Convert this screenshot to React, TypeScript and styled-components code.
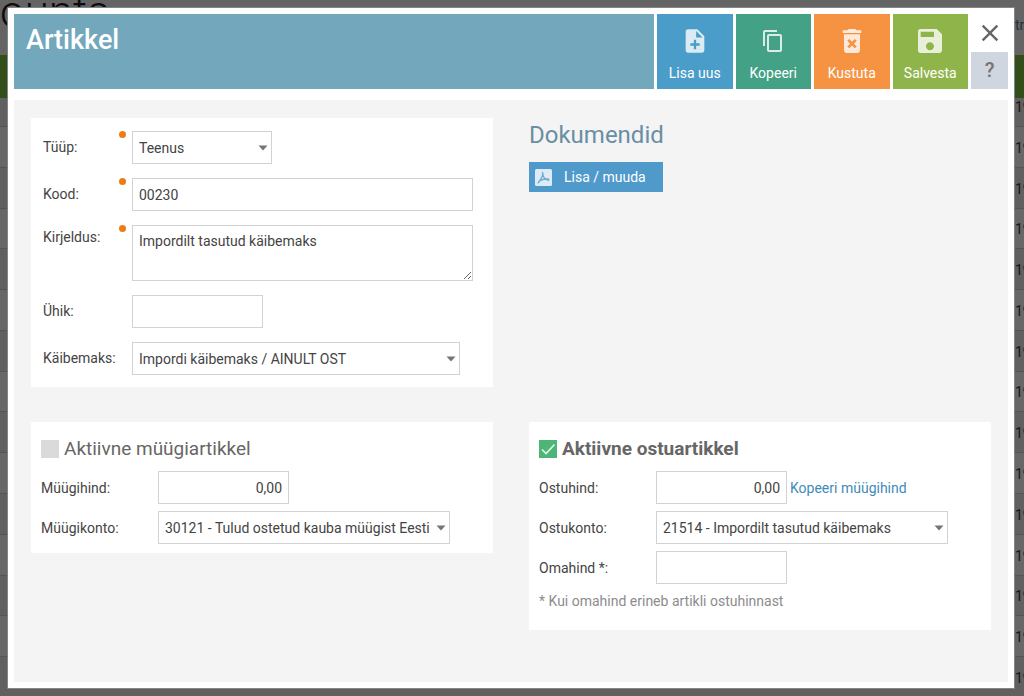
import React, { useState } from "react";
import styled, { createGlobalStyle } from "styled-components";
import {
  MdNoteAdd,
  MdContentCopy,
  MdDeleteForever,
  MdSave,
  MdClose,
} from "react-icons/md";

const GlobalStyle = createGlobalStyle`
  *, *::before, *::after { box-sizing: border-box; }
  body {
    margin: 0;
    background: #636363;
    color: #444;
    font: 14px/20px Roboto, "Liberation Sans", sans-serif;
  }
  button, input, select, textarea { font: inherit; color: inherit; border-radius: 0; }
`;

const Screen = styled.div`
  display: grid;
  grid-template: minmax(100vh, auto) / minmax(0, 1fr);
  overflow: hidden;

  > * {
    grid-area: 1 / 1;
  }
`;

/* Dimmed list page behind the dialog */
const Backdrop = styled.div`
  display: flex;
  flex-direction: column;
  height: 100vh;
  overflow: hidden;
  background: #646464;
  color: #141414;
`;

const BackdropTop = styled.div`
  display: flex;
  justify-content: space-between;
  flex: none;
  height: 55px;
`;

const BackdropHeading = styled.div`
  margin-top: -14px;
  font-size: 44px;
  font-weight: 300;
  line-height: 52px;
  color: #0c0c0c;
`;

const BackdropUser = styled.div`
  width: 9px;
  padding-top: 15px;
  overflow: hidden;
  white-space: nowrap;
  color: #26323a;
`;

const BackdropBand = styled.div`
  flex: none;
  height: 43px;
  background: #324f1a;
`;

const BackdropRows = styled.div`
  display: grid;
  flex: none;
  grid-template-rows: 29px repeat(14, 1fr);
  height: calc(100vh - 96px);
`;

const BackdropRow = styled.div`
  display: flex;
  justify-content: flex-end;
  align-items: flex-end;
  padding-bottom: 10px;
  border-bottom: 1px solid #545454;
  line-height: 18px;

  &:nth-child(even) {
    background: #676767;
  }
  &:nth-child(odd) {
    background: #606060;
  }

  span {
    width: 9px;
    overflow: hidden;
  }
`;

const Dialog = styled.main`
  display: flex;
  flex-direction: column;
  gap: 11px;
  margin: 8px 10px 8px 8px;
  padding: 6px;
  background: #fff;
  box-shadow: 0 0 0 1px #858585;
`;

const Header = styled.header`
  display: flex;
  gap: 3px;
  height: 75px;
`;

const Title = styled.h1`
  flex: 1;
  margin: 0;
  padding: 8px 12px;
  background: #73a7bc;
  color: #fff;
  font-size: 27px;
  font-weight: 500;
  line-height: 36px;
`;

const Actions = styled.div`
  display: grid;
  grid-template-columns: repeat(4, 1fr);
  gap: 3px;
  width: 311px;
`;

const ActionButton = styled.button<{ $color: string }>`
  display: flex;
  flex-direction: column;
  align-items: center;
  padding: 11px 0 0;
  border: 0;
  background: ${(p) => p.$color};
  color: #fff;
  cursor: pointer;

  span {
    display: flex;
    align-items: center;
    justify-content: center;
    height: 32px;
    margin-bottom: 6px;
    opacity: 0.8;
  }
`;

const Corner = styled.div`
  display: flex;
  flex-direction: column;
  width: 37px;
`;

const CornerButton = styled.button<{ $filled?: boolean }>`
  display: flex;
  flex: 1;
  align-items: center;
  justify-content: center;
  padding: 0;
  border: 0;
  background: ${(p) => (p.$filled ? "#cfd6df" : "#fff")};
  color: ${(p) => (p.$filled ? "#757575" : "#666")};
  font-size: 20px;
  font-weight: 500;
  cursor: pointer;
`;

const Body = styled.div`
  display: grid;
  flex: 1;
  grid-template-columns: repeat(2, minmax(0, 1fr));
  align-content: start;
  align-items: start;
  gap: 35px 36px;
  padding: 18px 17px;
  background: #f4f4f4;
`;

const DetailsCard = styled.section`
  display: flex;
  flex-direction: column;
  gap: 14px;
  padding: 13px 20px 12px 12px;
  background: #fff;
`;

const DetailsRow = styled.div<{ $top?: boolean }>`
  display: flex;
  align-items: ${(p) => (p.$top ? "flex-start" : "center")};

  label {
    flex: none;
    width: 76px;
    padding: ${(p) => (p.$top ? "2px 0" : "0 0 2px")};
    white-space: nowrap;
  }
`;

const Marker = styled.span<{ $on?: boolean }>`
  flex: none;
  align-self: flex-start;
  width: 7px;
  height: 7px;
  margin-right: 6px;
  border-radius: 50%;
  background: ${(p) => (p.$on ? "#f07a1a" : "transparent")};
`;

const TextInput = styled.input<{ $wide?: boolean }>`
  width: ${(p) => (p.$wide ? "100%" : "131px")};
  height: 33px;
  padding: 0 6px;
  border: 1px solid #d2d2d2;
  background: #fff;
`;

const AmountInput = styled(TextInput)`
  text-align: right;
`;

const TextArea = styled.textarea`
  display: block;
  width: 100%;
  height: 56px;
  padding: 5px 6px;
  border: 1px solid #d2d2d2;
  background: #fff;
  resize: vertical;
`;

const SelectBox = styled.div<{ $width: number }>`
  position: relative;
  width: ${(p) => p.$width}px;
  max-width: 100%;

  select {
    display: block;
    width: 100%;
    height: 33px;
    padding: 0 16px 0 6px;
    border: 1px solid #d2d2d2;
    background: #fff;
    appearance: none;
  }

  svg {
    position: absolute;
    top: 14px;
    right: 4px;
    pointer-events: none;
  }
`;

const Documents = styled.section`
  display: flex;
  flex-direction: column;
  align-items: flex-start;
  gap: 11px;
`;

const DocumentsTitle = styled.h2`
  margin: 0;
  padding-top: 1px;
  color: #6a8ea3;
  font-size: 24px;
  font-weight: 400;
  line-height: 32px;
`;

const DocumentsButton = styled.button`
  display: flex;
  align-items: center;
  gap: 12px;
  height: 30px;
  padding: 0 17px 0 6px;
  border: 0;
  background: #5099cb;
  color: #fff;
  cursor: pointer;
`;

const PriceCard = styled.section`
  display: flex;
  flex-direction: column;
  gap: 7px;
  padding: 14px 10px 9px;
  background: #fff;
`;

const PriceHeading = styled.label<{ $active?: boolean }>`
  display: flex;
  align-items: center;
  gap: 5px;
  margin-bottom: 2px;
  color: #666;
  font-size: 19px;
  font-weight: ${(p) => (p.$active ? 700 : 400)};
  line-height: 26px;
`;

const CheckFrame = styled.span`
  position: relative;
  display: flex;

  input {
    width: 18px;
    height: 18px;
    margin: 0;
    background: #dadada;
    appearance: none;
  }
  input:checked {
    background: #4db676;
  }
  svg {
    position: absolute;
    inset: 0;
    pointer-events: none;
  }
`;

const PriceRow = styled.div`
  display: flex;
  align-items: center;

  > label {
    flex: none;
    width: 117px;
  }
`;

const CopyLink = styled.a`
  margin-left: 3px;
  color: #3f8cb8;
  text-decoration: none;
`;

const Note = styled.p`
  margin: 0 0 10px;
  color: #8c8c8c;
`;

const PdfIcon = () => (
  <svg width="17" height="17" viewBox="0 0 17 17" aria-hidden="true">
    <rect width="17" height="17" rx="1.5" fill="#dcebf5" />
    <path
      d="M7.600 3.400C8.300 6.500 7 9.300 3.300 13.700M7.800 4.500C8 8 10 10.600 13.600 11.200M4.800 11.600C7.500 10.200 10.500 9.600 13.800 10.200"
      fill="none"
      stroke="#6fabd5"
      strokeWidth="1.400"
      strokeLinecap="round"
    />
  </svg>
);

type SelectProps = { id: string; width: number; value: string };

const Select = ({ id, width, value }: SelectProps) => (
  <SelectBox $width={width}>
    <select id={id} defaultValue={value}>
      <option>{value}</option>
    </select>
    <svg width="10" height="6" viewBox="0 0 10 6" aria-hidden="true">
      <path d="M0.500 0.500h9L5 5.500z" fill="#757575" />
    </svg>
  </SelectBox>
);

type CheckProps = { label: string; initial: boolean };

const ActiveToggle = ({ label, initial }: CheckProps) => {
  const [checked, setChecked] = useState(initial);
  return (
    <PriceHeading $active={checked}>
      <CheckFrame>
        <input
          type="checkbox"
          checked={checked}
          onChange={(e) => setChecked(e.target.checked)}
        />
        {checked && (
          <svg width="18" height="18" viewBox="0 0 18 18" aria-hidden="true">
            <path d="M3 9.500l4 4L15.500 4.500" fill="none" stroke="#e4f5ea" strokeWidth="1.600" />
          </svg>
        )}
      </CheckFrame>
      {label}
    </PriceHeading>
  );
};

const actions = [
  { label: "Lisa uus", color: "#4a9cc9", icon: <MdNoteAdd size={28} /> },
  { label: "Kopeeri", color: "#43a185", icon: <MdContentCopy size={24} /> },
  { label: "Kustuta", color: "#f59343", icon: <MdDeleteForever size={32} /> },
  { label: "Salvesta", color: "#8fb44a", icon: <MdSave size={32} /> },
];

export default function App() {
  return (
    <>
      <GlobalStyle />
      <Screen>
        <Backdrop aria-hidden="true">
          <BackdropTop>
            <BackdropHeading>ounts</BackdropHeading>
            <BackdropUser>tr</BackdropUser>
          </BackdropTop>
          <BackdropBand />
          <BackdropRows>
            {Array.from({ length: 15 }, (_, i) => (
              <BackdropRow key={i}>
                <span>19</span>
              </BackdropRow>
            ))}
          </BackdropRows>
        </Backdrop>

        <Dialog>
          <Header>
            <Title>Artikkel</Title>
            <Actions>
              {actions.map((a) => (
                <ActionButton key={a.label} type="button" $color={a.color}>
                  <span>{a.icon}</span>
                  {a.label}
                </ActionButton>
              ))}
            </Actions>
            <Corner>
              <CornerButton type="button" aria-label="Sulge">
                <MdClose size={28} />
              </CornerButton>
              <CornerButton type="button" $filled>
                ?
              </CornerButton>
            </Corner>
          </Header>

          <Body>
            <DetailsCard>
              <DetailsRow>
                <label htmlFor="type">Tüüp:</label>
                <Marker $on />
                <Select id="type" width={140} value="Teenus" />
              </DetailsRow>
              <DetailsRow>
                <label htmlFor="code">Kood:</label>
                <Marker $on />
                <TextInput id="code" $wide defaultValue="00230" />
              </DetailsRow>
              <DetailsRow $top>
                <label htmlFor="description">Kirjeldus:</label>
                <Marker $on />
                <TextArea id="description" defaultValue="Impordilt tasutud käibemaks" />
              </DetailsRow>
              <DetailsRow>
                <label htmlFor="unit">Ühik:</label>
                <Marker />
                <TextInput id="unit" />
              </DetailsRow>
              <DetailsRow>
                <label htmlFor="vat">Käibemaks:</label>
                <Marker />
                <Select id="vat" width={328} value="Impordi käibemaks / AINULT OST" />
              </DetailsRow>
            </DetailsCard>

            <Documents>
              <DocumentsTitle>Dokumendid</DocumentsTitle>
              <DocumentsButton type="button">
                <PdfIcon />
                Lisa / muuda
              </DocumentsButton>
            </Documents>

            <PriceCard>
              <ActiveToggle label="Aktiivne müügiartikkel" initial={false} />
              <PriceRow>
                <label htmlFor="sale-price">Müügihind:</label>
                <AmountInput id="sale-price" defaultValue="0,00" />
              </PriceRow>
              <PriceRow>
                <label htmlFor="sale-account">Müügikonto:</label>
                <Select
                  id="sale-account"
                  width={292}
                  value="30121 - Tulud ostetud kauba müügist Eesti"
                />
              </PriceRow>
            </PriceCard>

            <PriceCard>
              <ActiveToggle label="Aktiivne ostuartikkel" initial />
              <PriceRow>
                <label htmlFor="buy-price">Ostuhind:</label>
                <AmountInput id="buy-price" defaultValue="0,00" />
                <CopyLink href="#buy-price">Kopeeri müügihind</CopyLink>
              </PriceRow>
              <PriceRow>
                <label htmlFor="buy-account">Ostukonto:</label>
                <Select
                  id="buy-account"
                  width={292}
                  value="21514 - Impordilt tasutud käibemaks"
                />
              </PriceRow>
              <PriceRow>
                <label htmlFor="own-price">Omahind *:</label>
                <AmountInput id="own-price" />
              </PriceRow>
              <Note>* Kui omahind erineb artikli ostuhinnast</Note>
            </PriceCard>
          </Body>
        </Dialog>
      </Screen>
    </>
  );
}
